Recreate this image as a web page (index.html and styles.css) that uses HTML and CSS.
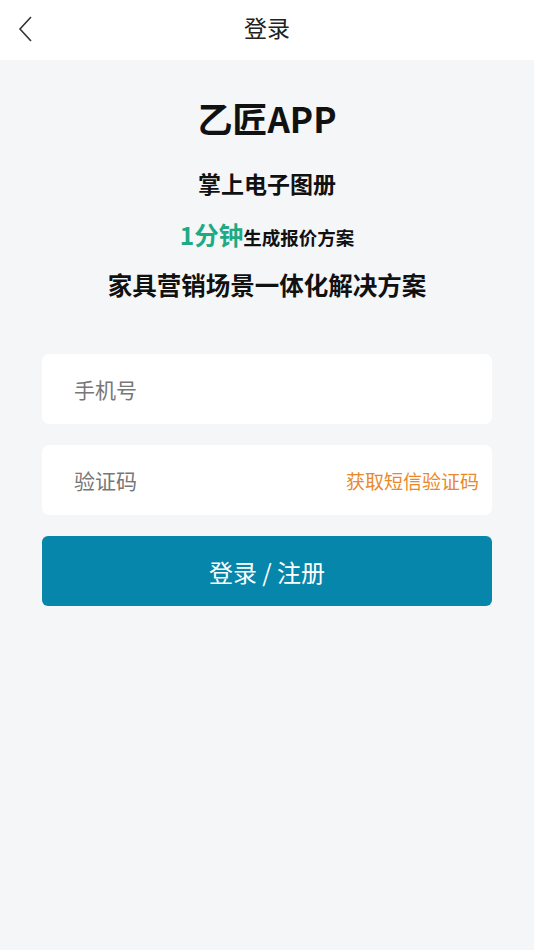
FILE: index.html
```html
<!DOCTYPE html>
<html lang="zh-CN">

<head>
    <meta charset="UTF-8">
    <meta name="viewport" content="width=device-width, initial-scale=1.0">
    <title>登录</title>
    <link rel="stylesheet" href="styles.css">
</head>

<body>
    <header class="topbar">
        <a class="back" href="#">
            <svg width="16" height="26" viewBox="0 0 16 26">
                <path d="M13 1 L2 13 L13 25" fill="none" stroke="#333" stroke-width="1.6" />
            </svg>
        </a>
        <h1 class="topbar-title">登录</h1>
    </header>

    <main class="page">
        <section class="intro">
            <h2 class="app-name">乙匠APP</h2>
            <p class="slogan">掌上电子图册</p>
            <p class="quote"><span class="quote-em">1分钟</span>生成报价方案</p>
            <p class="slogan-lg">家具营销场景一体化解决方案</p>
        </section>

        <form class="login-form">
            <div class="field">
                <input type="tel" placeholder="手机号">
            </div>
            <div class="field">
                <input type="text" placeholder="验证码">
                <a class="sms" href="#">获取短信验证码</a>
            </div>
            <button type="submit" class="submit">登录 / 注册</button>
        </form>
    </main>
</body>

</html>
```

FILE: styles.css
```css
body {
    font-family: 'Noto Sans CJK SC', 'Noto Sans', sans-serif;
    margin: 0;
    padding: 0;
    background-color: #f5f6f8;
    color: #111;
}

.topbar {
    height: 60px;
    box-sizing: border-box;
    padding-bottom: 6px;
    background-color: #fff;
    display: flex;
    align-items: center;
    justify-content: center;
    position: relative;
}

.back {
    position: absolute;
    left: 18px;
    top: 16px;
    display: flex;
}

.topbar-title {
    margin: 0;
    font-size: 23px;
    font-weight: normal;
    color: #222;
}

.page {
    padding: 0 42px;
}

.intro {
    text-align: center;
    padding-top: 36px;
}

.app-name {
    margin: 0;
    font-size: 35px;
    font-weight: bold;
    line-height: 44px;
}

.slogan {
    margin: 26px 0 0;
    font-size: 23px;
    font-weight: bold;
    line-height: 34px;
}

.quote {
    margin: 18px 0 0;
    font-size: 18.5px;
    font-weight: bold;
    line-height: 34px;
}

.quote-em {
    font-size: 24.5px;
    color: #1eaa84;
}

.slogan-lg {
    margin: 14px 0 0;
    font-size: 24.5px;
    font-weight: bold;
    line-height: 34px;
}

.login-form {
    margin-top: 52px;
    display: grid;
    gap: 21px;
}

.field {
    height: 70px;
    background-color: #fff;
    border-radius: 7px;
    display: flex;
    align-items: center;
    padding: 0 13px 0 32px;
}

.field input {
    flex: 1;
    min-width: 0;
    border: none;
    outline: none;
    background: transparent;
    font-family: inherit;
    font-size: 21px;
    color: #333;
    padding: 0;
}

.field input::placeholder {
    color: #777;
}

.sms {
    font-size: 19px;
    color: #e9892b;
    text-decoration: none;
}

.submit {
    height: 70px;
    border: none;
    border-radius: 6px;
    background-color: #0686ab;
    color: #fff;
    font-family: inherit;
    font-size: 24px;
    cursor: pointer;
}
```
